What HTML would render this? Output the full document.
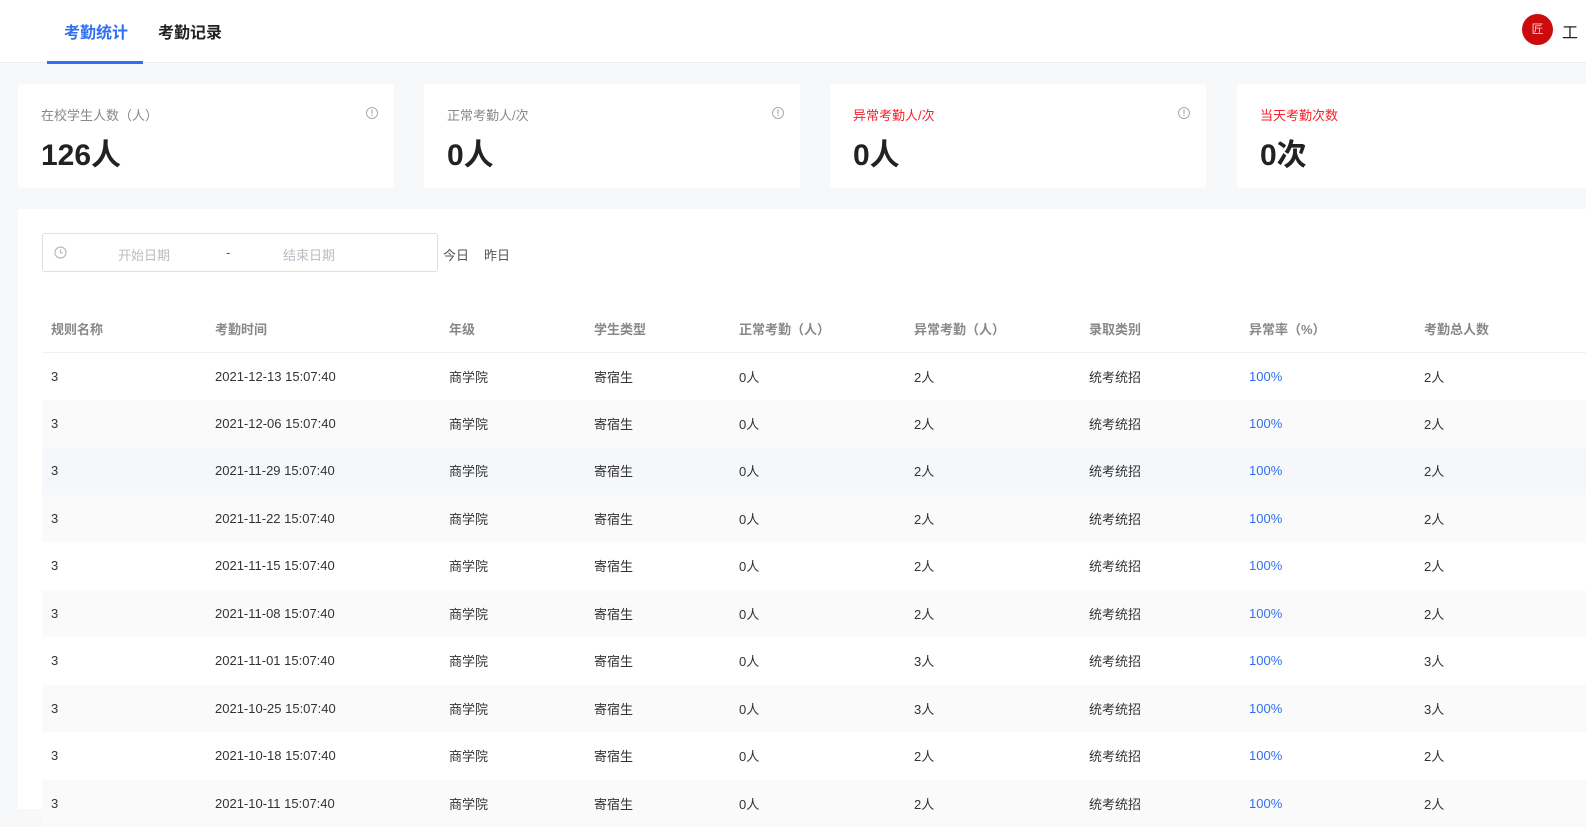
<!DOCTYPE html>
<html><head><meta charset="utf-8"><style>
*{margin:0;padding:0;box-sizing:border-box}
body{width:1586px;height:799px;overflow:hidden;background:#f7f8fa;font-family:"Liberation Sans","Noto Sans CJK SC",sans-serif;position:relative}
.hdr{position:absolute;left:0;top:0;width:1586px;height:63px;background:#fff;border-bottom:1px solid #eceef2}
.tab{position:absolute;top:19px;font-size:16px;font-weight:bold;color:#222}
.ul{position:absolute;left:47px;top:61px;width:96px;height:3px;background:#2f6ff4}
.av{position:absolute;left:1522px;top:14px;width:31px;height:31px;border-radius:50%;background:#cc0c0c;color:#f2c9c9;font-size:12px;text-align:center;line-height:31px}
.card{position:absolute;top:84px;width:376px;height:104px;background:#fff;border-radius:4px}
.card .t{position:absolute;left:23px;top:21px;font-size:13px;color:#888}
.card .v{position:absolute;left:23px;top:46px;font-size:30px;font-weight:bold;color:#222}
.card .i{position:absolute;right:16px;top:23px;width:12px;height:12px;border:1.3px solid #aaa;border-radius:50%;font-size:9px;line-height:10px;text-align:center;color:#aaa;font-weight:bold}
.panel{position:absolute;left:18px;top:209px;width:1580px;height:600px;background:#fff}
.date{position:absolute;left:42px;top:233px;width:396px;height:39px;border:1px solid #dcdfe6;border-radius:3px;font-size:13px;color:#b8bcc4}
.date span{position:absolute;top:11px}
.q{position:absolute;top:245px;font-size:13px;color:#555}
table{position:absolute;left:42px;top:305px;border-collapse:collapse;table-layout:fixed;width:1560px;font-size:13px;color:#333}
th{height:47px;text-align:left;color:#888;font-weight:bold;border-bottom:1px solid #f0f0f0;padding:0}
td{height:47.5px;padding:0}
th:first-child,td:first-child{padding-left:9px}
tr:nth-child(odd) td{background:#fafafa}
tr.h td{background:#f5f7fa!important}
.b{color:#2f6ff4}
</style></head><body>
<div class="hdr">
<div class="tab" style="left:64px;color:#2f6ff4">考勤统计</div>
<div class="tab" style="left:158px">考勤记录</div>
<div class="ul"></div>
<div class="av">匠</div>
<div style="position:absolute;left:1562px;top:19px;font-size:16px;color:#222">工</div>
</div>
<div class="card" style="left:18px"><div class="t">在校学生人数（人）</div><div class="v">126人</div><div class="i">!</div></div>
<div class="card" style="left:424px"><div class="t">正常考勤人/次</div><div class="v">0人</div><div class="i">!</div></div>
<div class="card" style="left:830px"><div class="t" style="color:#f5222d">异常考勤人/次</div><div class="v">0人</div><div class="i">!</div></div>
<div class="card" style="left:1237px"><div class="t" style="color:#f5222d">当天考勤次数</div><div class="v">0次</div></div>
<div class="panel"></div>
<div class="date"><svg style="position:absolute;left:11px;top:12px" width="13" height="13" viewBox="0 0 13 13"><circle cx="6.5" cy="6.5" r="5.5" fill="none" stroke="#bbb" stroke-width="1.2"/><path d="M6.5 3.5V6.8H9" fill="none" stroke="#bbb" stroke-width="1.2"/></svg><span style="left:75px">开始日期</span><span style="left:183px;color:#555">-</span><span style="left:240px">结束日期</span></div>
<div class="q" style="left:443px">今日</div><div class="q" style="left:484px">昨日</div>
<table>
<colgroup><col style="width:173px"><col style="width:234px"><col style="width:145px"><col style="width:145px"><col style="width:175px"><col style="width:175px"><col style="width:160px"><col style="width:175px"><col></colgroup>
<tr><th>规则名称</th><th>考勤时间</th><th>年级</th><th>学生类型</th><th>正常考勤（人）</th><th>异常考勤（人）</th><th>录取类别</th><th>异常率（%）</th><th>考勤总人数</th></tr>
<tr><td>3</td><td>2021-12-13 15:07:40</td><td>商学院</td><td>寄宿生</td><td>0人</td><td>2人</td><td>统考统招</td><td class="b">100%</td><td>2人</td></tr>
<tr><td>3</td><td>2021-12-06 15:07:40</td><td>商学院</td><td>寄宿生</td><td>0人</td><td>2人</td><td>统考统招</td><td class="b">100%</td><td>2人</td></tr>
<tr class="h"><td>3</td><td>2021-11-29 15:07:40</td><td>商学院</td><td>寄宿生</td><td>0人</td><td>2人</td><td>统考统招</td><td class="b">100%</td><td>2人</td></tr>
<tr><td>3</td><td>2021-11-22 15:07:40</td><td>商学院</td><td>寄宿生</td><td>0人</td><td>2人</td><td>统考统招</td><td class="b">100%</td><td>2人</td></tr>
<tr><td>3</td><td>2021-11-15 15:07:40</td><td>商学院</td><td>寄宿生</td><td>0人</td><td>2人</td><td>统考统招</td><td class="b">100%</td><td>2人</td></tr>
<tr><td>3</td><td>2021-11-08 15:07:40</td><td>商学院</td><td>寄宿生</td><td>0人</td><td>2人</td><td>统考统招</td><td class="b">100%</td><td>2人</td></tr>
<tr><td>3</td><td>2021-11-01 15:07:40</td><td>商学院</td><td>寄宿生</td><td>0人</td><td>3人</td><td>统考统招</td><td class="b">100%</td><td>3人</td></tr>
<tr><td>3</td><td>2021-10-25 15:07:40</td><td>商学院</td><td>寄宿生</td><td>0人</td><td>3人</td><td>统考统招</td><td class="b">100%</td><td>3人</td></tr>
<tr><td>3</td><td>2021-10-18 15:07:40</td><td>商学院</td><td>寄宿生</td><td>0人</td><td>2人</td><td>统考统招</td><td class="b">100%</td><td>2人</td></tr>
<tr><td>3</td><td>2021-10-11 15:07:40</td><td>商学院</td><td>寄宿生</td><td>0人</td><td>2人</td><td>统考统招</td><td class="b">100%</td><td>2人</td></tr>
</table>
</body></html>
